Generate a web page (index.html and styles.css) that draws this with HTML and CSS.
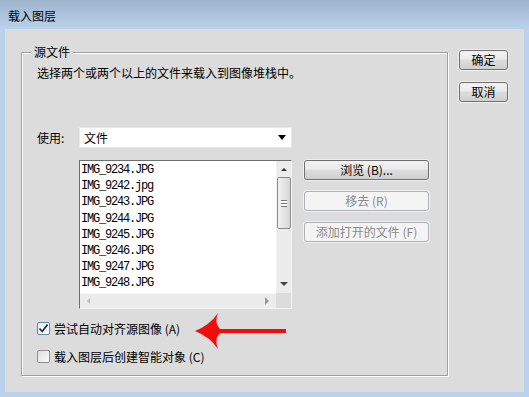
FILE: index.html
```html
<!DOCTYPE html>
<html>
<head>
    <title>载入图层</title>
    <meta charset="UTF-8">
    <link rel="stylesheet" href="styles.css">
</head>
<body>
    <div class="window">
        <div class="titlebar">载入图层</div>
        <div class="dialog">
            <div class="group">
                <span class="group-title">源文件</span>
                <div class="desc">选择两个或两个以上的文件来载入到图像堆栈中。</div>
                <div class="use-row">
                    <span class="use-label">使用:</span>
                    <div class="select">
                        <span>文件</span>
                        <span class="caret"></span>
                    </div>
                </div>
                <div class="files">
                    <div class="listbox">
                        <ul class="file-list">
                            <li>IMG_9234.JPG</li>
                            <li>IMG_9242.jpg</li>
                            <li>IMG_9243.JPG</li>
                            <li>IMG_9244.JPG</li>
                            <li>IMG_9245.JPG</li>
                            <li>IMG_9246.JPG</li>
                            <li>IMG_9247.JPG</li>
                            <li>IMG_9248.JPG</li>
                        </ul>
                        <div class="vscroll">
                            <span class="arrow up"></span>
                            <div class="thumb"><span class="grip"></span></div>
                            <span class="arrow down"></span>
                        </div>
                        <div class="hscroll">
                            <span class="arrow left"></span>
                            <span class="arrow right"></span>
                        </div>
                        <div class="corner"></div>
                    </div>
                    <div class="file-actions">
                        <button class="btn">浏览 (B)...</button>
                        <button class="btn" disabled>移去 (R)</button>
                        <button class="btn" disabled>添加打开的文件 (F)</button>
                    </div>
                </div>
                <div class="checks">
                    <label class="check">
                        <span class="box focused">
                            <svg width="11" height="11" viewBox="0 0 11 11"><path d="M1.5 5.5 L4.2 8.5 L9.5 1.5" fill="none" stroke="#2b2b2b" stroke-width="1.7"/></svg>
                        </span>
                        尝试自动对齐源图像 (A)
                    </label>
                    <label class="check">
                        <span class="box"></span>
                        载入图层后创建智能对象 (C)
                    </label>
                </div>
            </div>
            <div class="actions">
                <button class="btn">确定</button>
                <button class="btn">取消</button>
            </div>
        </div>
        <svg class="red-arrow" width="96" height="40" viewBox="0 0 96 40">
            <path d="M2 20 Q17 14 25 2 Q21 12 27 18 L93 18 L93 22 L27 22 Q21 28 25 38 Q17 26 2 20 Z" fill="#f20d0d"/>
        </svg>
    </div>
</body>
</html>
```

FILE: styles.css
```css
body {
    margin: 0;
    font-family: "Noto Sans CJK SC", "Liberation Sans", sans-serif;
    font-size: 12px;
    color: #000;
}
.window {
    position: relative;
    width: 529px;
    height: 397px;
    background: #bad2ec;
}
.titlebar {
    height: 29px;
    box-sizing: border-box;
    padding: 8px 0 0 8px;
    line-height: 16px;
    font-size: 12px;
    background: linear-gradient(#9eb4cb, #b2c9e2 70%, #bad2ec);
}
.dialog {
    display: flex;
    height: 363px;
    margin: 0 5px;
    background: #dcdcdc;
}
.group {
    position: relative;
    box-sizing: border-box;
    width: 427px;
    height: 324px;
    margin: 23px 0 0 16px;
    border: 1px solid #a0a0a0;
    box-shadow: 1px 1px 0 #fff, inset 1px 1px 0 #fff;
}
.group-title {
    position: absolute;
    top: -9px;
    left: 9px;
    padding: 0 3px;
    line-height: 16px;
    background: #dcdcdc;
}
.desc {
    margin: 12px 0 0 15px;
    line-height: 16px;
}
.use-row {
    display: flex;
    align-items: center;
    margin-top: 46px;
    padding-left: 15px;
}
.use-label {
    width: 42px;
}
.select {
    display: flex;
    align-items: center;
    justify-content: space-between;
    box-sizing: border-box;
    width: 213px;
    height: 21px;
    padding: 0 5px 0 4px;
    background: #fff;
    border: 1px solid #e8e8e8;
}
.caret {
    width: 0;
    height: 0;
    border-left: 4px solid transparent;
    border-right: 4px solid transparent;
    border-top: 5px solid #000;
}
.files {
    display: flex;
    margin-top: 12px;
}
.listbox {
    display: grid;
    grid-template-columns: 1fr 15px;
    grid-template-rows: 1fr 15px;
    box-sizing: border-box;
    width: 213px;
    height: 149px;
    margin-left: 57px;
    border: 1px solid;
    border-color: #6e6e6e #f4f4f4 #f4f4f4 #6e6e6e;
    background: #fff;
}
.file-list {
    margin: 0;
    padding: 1px 0 0 1px;
    list-style: none;
    font-family: "Liberation Mono", monospace;
    font-size: 12px;
    letter-spacing: -1.2px;
    overflow: hidden;
}
.file-list li {
    height: 16.2px;
    line-height: 16px;
}
.vscroll {
    display: flex;
    flex-direction: column;
    align-items: center;
    background: #ececec;
    border-left: 1px solid #f2f2f2;
}
.arrow {
    width: 0;
    height: 0;
}
.arrow.up {
    margin: 7px 0 6px;
    border-left: 3px solid transparent;
    border-right: 3px solid transparent;
    border-bottom: 3px solid #333;
}
.arrow.down {
    margin-top: auto;
    margin-bottom: 7px;
    border-left: 4px solid transparent;
    border-right: 4px solid transparent;
    border-top: 4px solid #444;
}
.thumb {
    display: flex;
    align-items: center;
    justify-content: center;
    box-sizing: border-box;
    width: 14px;
    height: 52px;
    border: 1px solid #8c8c8c;
    border-radius: 2px;
    background: linear-gradient(90deg, #f2f2f2, #e4e4e4 50%, #d6d6d6);
}
.grip {
    width: 6px;
    height: 5px;
    border-top: 1px solid #777;
    border-bottom: 1px solid #777;
    background: linear-gradient(#fff 0 2px, #777 2px 3px, #fff 3px);
}
.hscroll {
    display: flex;
    align-items: center;
    justify-content: space-between;
    padding: 0 7px 0 7px;
    background: #ececec;
    border-top: 1px solid #f6f6f6;
}
.arrow.left {
    border-top: 3px solid transparent;
    border-bottom: 3px solid transparent;
    border-right: 3px solid #bdbdbd;
}
.arrow.right {
    border-top: 4px solid transparent;
    border-bottom: 4px solid transparent;
    border-left: 4px solid #999;
}
.corner {
    background: #dcdcdc;
}
.file-actions {
    display: flex;
    flex-direction: column;
    gap: 11px;
    margin-left: 12px;
}
.file-actions .btn {
    width: 125px;
}
.btn {
    box-sizing: border-box;
    height: 20px;
    padding: 0;
    font-family: "Noto Sans CJK SC", "Liberation Sans", sans-serif;
    font-size: 12px;
    line-height: 16px;
    color: #000;
    border: 1px solid #707070;
    border-radius: 3px;
    background: linear-gradient(#f2f2f2, #ebebeb 45%, #dddddd 50%, #cfcfcf);
    box-shadow: 0 0 0 1px #f0f0f0;
}
.btn:disabled {
    color: #8a8a8a;
    border-color: #adb2b5;
    background: #f4f4f4;
}
.checks {
    display: flex;
    flex-direction: column;
    gap: 15px;
    margin: 13px 0 0 15px;
}
.check {
    display: flex;
    align-items: center;
    gap: 4px;
    height: 13px;
    line-height: 16px;
}
.box {
    display: flex;
    align-items: center;
    justify-content: center;
    box-sizing: border-box;
    width: 13px;
    height: 13px;
    border: 1px solid #8e8f8f;
    border-radius: 2px;
    background: linear-gradient(135deg, #dedede, #fbfbfb);
}
.box.focused {
    border-color: #5b8bad;
    background: linear-gradient(135deg, #e5eef5, #fbfcfd);
}
.actions {
    display: flex;
    flex-direction: column;
    gap: 12px;
    margin: 21px 0 0 11px;
}
.actions .btn {
    width: 49px;
}
.red-arrow {
    position: absolute;
    left: 193px;
    top: 311px;
}
```
